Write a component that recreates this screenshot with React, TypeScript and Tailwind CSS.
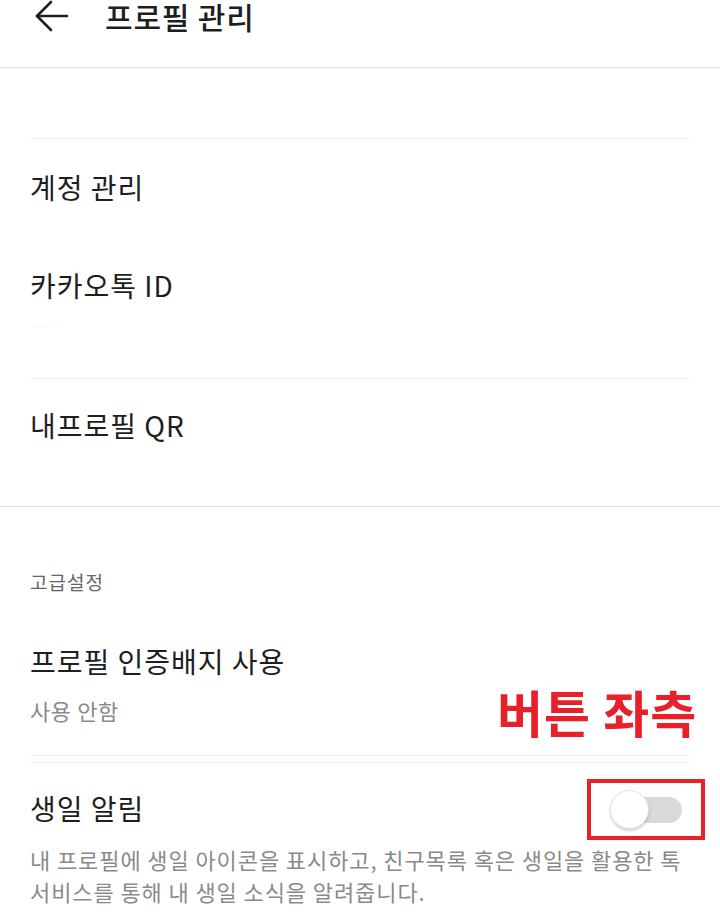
const font = { fontFamily: '"Noto Sans CJK KR", "Noto Sans", sans-serif' }

function Divider({ full }: { full?: boolean }) {
  return full ? (
    <div className="h-px w-full bg-[#e2e2e2]" />
  ) : (
    <div className="mx-[30px] h-px bg-[#f0f0f0]" />
  )
}

function BackArrow() {
  return (
    <svg width="34" height="32" viewBox="0 0 34 32" fill="none" stroke="#1e1e1e" strokeWidth="2.6" strokeLinecap="round" strokeLinejoin="round">
      <path d="M2 16h30" />
      <path d="M16 2 2 16l14 14" />
    </svg>
  )
}

export default function App() {
  return (
    <div className="relative h-[916px] w-[720px] overflow-hidden bg-white text-[#1e1e1e]" style={font}>
      {/* header */}
      <div className="h-[68px] border-b border-[#e0e0e0]">
        <div className="flex h-[32px] items-center">
          <div className="ml-[35px]">
            <BackArrow />
          </div>
          <h1 className="ml-[36px] text-[30px] font-medium leading-[32px] tracking-[0.8px]">프로필 관리</h1>
        </div>
      </div>

      <div className="h-[70px]" />
      <Divider />

      <div className="flex h-[96px] items-center px-[30px]">
        <span className="text-[28px] leading-none tracking-[1px]">계정 관리</span>
      </div>

      <div className="flex h-[143px] flex-col px-[30px] pt-[36px]">
        <span className="text-[28px] leading-none tracking-[1px]">카카오톡 ID</span>
        <span className="mt-[20px] text-[14px] leading-none text-[#f2f2f2]">· · ·</span>
      </div>
      <Divider />

      <div className="h-[127px] px-[30px] pt-[32px]">
        <span className="text-[28px] leading-none tracking-[1px]">내프로필 QR</span>
      </div>
      <Divider full />

      <div className="h-[140px] px-[30px] pt-[65px]">
        <span className="block text-[19px] leading-none tracking-[1px] text-[#666]">고급설정</span>
      </div>

      <div className="flex h-[108px] flex-col px-[30px]">
        <span className="text-[28px] leading-none tracking-[1px]">프로필 인증배지 사용</span>
        <span className="mt-[24px] text-[22px] leading-none tracking-[0.6px] text-[#8a8a8a]">사용 안함</span>
      </div>
      <Divider />
      <div className="h-[6px]" />
      <Divider />

      <div className="flex h-[90px] items-center justify-between pl-[30px] pr-[38px]">
        <span className="text-[28px] leading-none tracking-[1px]">생일 알림</span>
        <div className="relative mt-[4px] h-[26px] w-[68px] rounded-full bg-[#d9d9d9]">
          <div className="absolute -left-[4px] -top-[7px] h-[39px] w-[39px] rounded-full border border-[#e4e4e4] bg-white shadow-[0_2px_3px_rgba(0,0,0,0.18)]" />
        </div>
      </div>

      <p className="-mt-[10px] break-keep pl-[30px] pr-[24px] text-[22px] leading-[32px] tracking-[0.9px] text-[#8a8a8a]">
        내 프로필에 생일 아이콘을 표시하고, 친구목록 혹은 생일을 활용한 톡 서비스를 통해 내 생일 소식을 알려줍니다.
      </p>

      {/* annotation overlay */}
      <span className="absolute left-[497px] top-[686px] text-[50px] font-bold leading-none tracking-[1px] text-[#e8202a]">
        버튼 좌측
      </span>
      <div className="absolute left-[587px] top-[779px] h-[61px] w-[118px] border-[4px] border-[#e8202a]" />
    </div>
  )
}
